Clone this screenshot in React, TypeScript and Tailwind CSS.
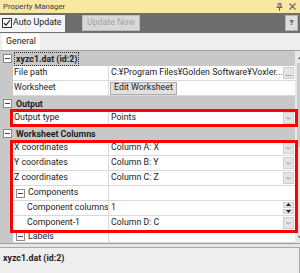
import React from "react";

const Minus = ({ className = "" }: { className?: string }) => (
  <div className={"w-[9px] h-[9px] border border-[#8a8a8a] bg-white flex items-center justify-center shrink-0 " + className}>
    <div className="w-[5px] h-px bg-[#444]" />
  </div>
);

const Chevron = () => (
  <svg width="11" height="12" viewBox="0 0 11 12">
    <path d="M3 5 L5.5 7.5 L8 5" fill="none" stroke="#7a7a7a" strokeWidth="1" />
  </svg>
);

const DropBtn = () => (
  <div className="ml-auto mr-[1px] w-[11px] h-[12px] bg-[#e4e4e4] border border-[#cfcfcf] flex items-center justify-center shrink-0">
    <Chevron />
  </div>
);

const Spin = () => (
  <div className="ml-auto mr-[1px] w-[11px] h-[12px] flex flex-col gap-px shrink-0">
    <div className="flex-1 bg-[#e4e4e4] border border-[#cfcfcf] flex items-center justify-center">
      <svg width="5" height="3" viewBox="0 0 5 3"><path d="M0 3 L2.5 0 L5 3Z" fill="#222" /></svg>
    </div>
    <div className="flex-1 bg-[#e4e4e4] border border-[#cfcfcf] flex items-center justify-center">
      <svg width="5" height="3" viewBox="0 0 5 3"><path d="M0 0 L2.5 3 L5 0Z" fill="#222" /></svg>
    </div>
  </div>
);

const Category = ({ label, selected = false }: { label: string; selected?: boolean }) => (
  <div className="h-[15px] bg-[#c8c8c8] flex items-center shrink-0">
    <Minus className="ml-[3px]" />
    <span
      className={
        "ml-[2px] font-bold leading-[12px] px-px whitespace-nowrap " +
        (selected ? "border border-dotted border-[#333]" : "border border-transparent")
      }
    >
      {label}
    </span>
  </div>
);

const Row = ({
  label,
  children,
  indent = 0,
  sub = false,
  h = "h-[15px]",
}: {
  label: string;
  children?: React.ReactNode;
  indent?: number;
  sub?: boolean;
  h?: string;
}) => (
  <div className={"flex shrink-0 " + h}>
    <div className="w-[13px] bg-[#c8c8c8] shrink-0" />
    <div className="w-[96px] shrink-0 border-r border-b border-[#d9d9d9] bg-white flex items-center overflow-hidden whitespace-nowrap">
      {sub ? (
        <>
          <Minus className="ml-[3px]" />
          <span className="ml-[3px]">{label}</span>
        </>
      ) : (
        <span className={indent ? "pl-[14px]" : "pl-[1px]"}>{label}</span>
      )}
    </div>
    <div className="flex-1 border-b border-[#d9d9d9] bg-white flex items-center pl-[2px] overflow-hidden whitespace-nowrap">
      {children}
    </div>
  </div>
);

export default function App() {
  return (
    <div className="w-[300px] h-[273px] overflow-hidden bg-[#eeeeee] flex flex-col font-['Roboto',sans-serif] text-[8.8px] text-[#222]">
      {/* title bar */}
      <div className="h-[13px] bg-[#fbe7a4] flex items-center pl-[3px] pr-[4px] shrink-0">
        <span className="text-[7.8px] text-[#3a3a3a]">Property Manager</span>
        <div className="ml-auto flex items-center gap-[6px]">
          <svg width="7" height="8" viewBox="0 0 7 8">
            <path d="M2 0.5 H5 V4.5 H2 Z M0.5 4.5 H6.5 M3.5 4.5 V8 M4 1 V4" fill="none" stroke="#666" strokeWidth="1" />
          </svg>
          <svg width="7" height="7" viewBox="0 0 7 7">
            <path d="M0.5 0.5 L6.5 6.5 M6.5 0.5 L0.5 6.5" stroke="#666" strokeWidth="1.1" />
          </svg>
        </div>
      </div>
      {/* toolbar */}
      <div className="h-[20px] bg-[#6d6d6d] flex items-center shrink-0">
        <div className="w-[65px] h-[17px] bg-[#f4f4f4] flex items-center">
          <div className="ml-[2px] w-[10px] h-[10px] border border-[#333] bg-white flex items-center justify-center">
            <svg width="8" height="8" viewBox="0 0 8 8">
              <path d="M1 4 L3 6.3 L7 1" fill="none" stroke="#222" strokeWidth="1.2" />
            </svg>
          </div>
          <span className="ml-[1px]">Auto Update</span>
        </div>
        <div className="ml-[17px] w-[58px] h-[16px] bg-[#d8d8d8] border border-[#bdbdbd] flex items-center justify-center text-[#a3a3a3]">
          Update Now
        </div>
        <div className="ml-auto mr-[2px] w-[13px] h-[16px] bg-[#dddddd] border border-[#b5b5b5] flex items-center justify-center font-bold text-[#333] text-[8px]">
          ?
        </div>
      </div>
      {/* tabs */}
      <div className="h-[17px] flex items-end pl-[2px] shrink-0">
        <div className="w-[38px] h-[16px] bg-white flex items-center justify-center">General</div>
      </div>
      <div className="h-px bg-[#a0a0a0] shrink-0" />
      {/* grid */}
      <div className="h-[192px] flex shrink-0">
        <div className="flex-1 flex flex-col bg-white">
          <Category label="xyzc1.dat (id:2)" selected />
          <Row label="File path">
            <span>C:¥Program Files¥Golden Software¥Voxler...</span>
            <div className="ml-auto mr-[1px] w-[11px] h-[12px] bg-[#e4e4e4] border border-[#cfcfcf] flex items-end justify-center leading-[8px] text-[8px] shrink-0">
              ...
            </div>
          </Row>
          <Row label="Worksheet">
            <div className="-ml-[1px] h-[13px] px-[3px] bg-[#e1e1e1] border border-[#adadad] flex items-center">
              Edit Worksheet
            </div>
          </Row>
          <Category label="Output" />
          <div className="relative">
            <Row label="Output type">
              <span>Points</span>
              <DropBtn />
            </Row>
            <div className="absolute top-[-2px] bottom-[-1px] left-[10px] right-[-3px] border-[3px] border-[#ff0000] pointer-events-none" />
          </div>
          <Category label="Worksheet Columns" />
          <div className="relative">
            <Row label="X coordinates">
              <span>Column A: X</span>
              <DropBtn />
            </Row>
            <Row label="Y coordinates">
              <span>Column B: Y</span>
              <DropBtn />
            </Row>
            <Row label="Z coordinates">
              <span>Column C: Z</span>
              <DropBtn />
            </Row>
            <Row label="Components" sub />
            <Row label="Component columns" indent={1}>
              <span>1</span>
              <Spin />
            </Row>
            <Row label="Component-1" indent={1}>
              <span>Column D: C</span>
              <DropBtn />
            </Row>
            <div className="absolute top-[-1px] bottom-[-2px] left-[10px] right-[-3px] border-[3px] border-[#ff0000] pointer-events-none" />
          </div>
          <Row label="Labels" sub h="h-[12px]" />
        </div>
        {/* scrollbar */}
        <div className="w-[13px] bg-[#e8e8e8] flex flex-col items-center shrink-0">
          <div className="h-[12px] flex items-center justify-center">
            <svg width="7" height="5" viewBox="0 0 7 5">
              <path d="M0.5 4 L3.5 1 L6.5 4" fill="none" stroke="#555" strokeWidth="1.2" />
            </svg>
          </div>
          <div className="w-[9px] h-[84px] bg-[#c9c9c9]" />
          <div className="flex-1" />
          <div className="h-[12px] flex items-center justify-center">
            <svg width="7" height="5" viewBox="0 0 7 5">
              <path d="M0.5 1 L3.5 4 L6.5 1" fill="none" stroke="#555" strokeWidth="1.2" />
            </svg>
          </div>
        </div>
      </div>
      {/* status */}
      <div className="flex-1 flex flex-col border-t border-[#a0a0a0]">
        <div className="h-[3px] bg-[#e6e6e6]" />
        <div className="flex-1 border-t border-r border-[#a8a8a8] bg-[#eeeeee] pl-[3px] pt-[4px]">
          <span className="font-bold leading-[11px]">xyzc1.dat (id:2)</span>
        </div>
      </div>
    </div>
  );
}
